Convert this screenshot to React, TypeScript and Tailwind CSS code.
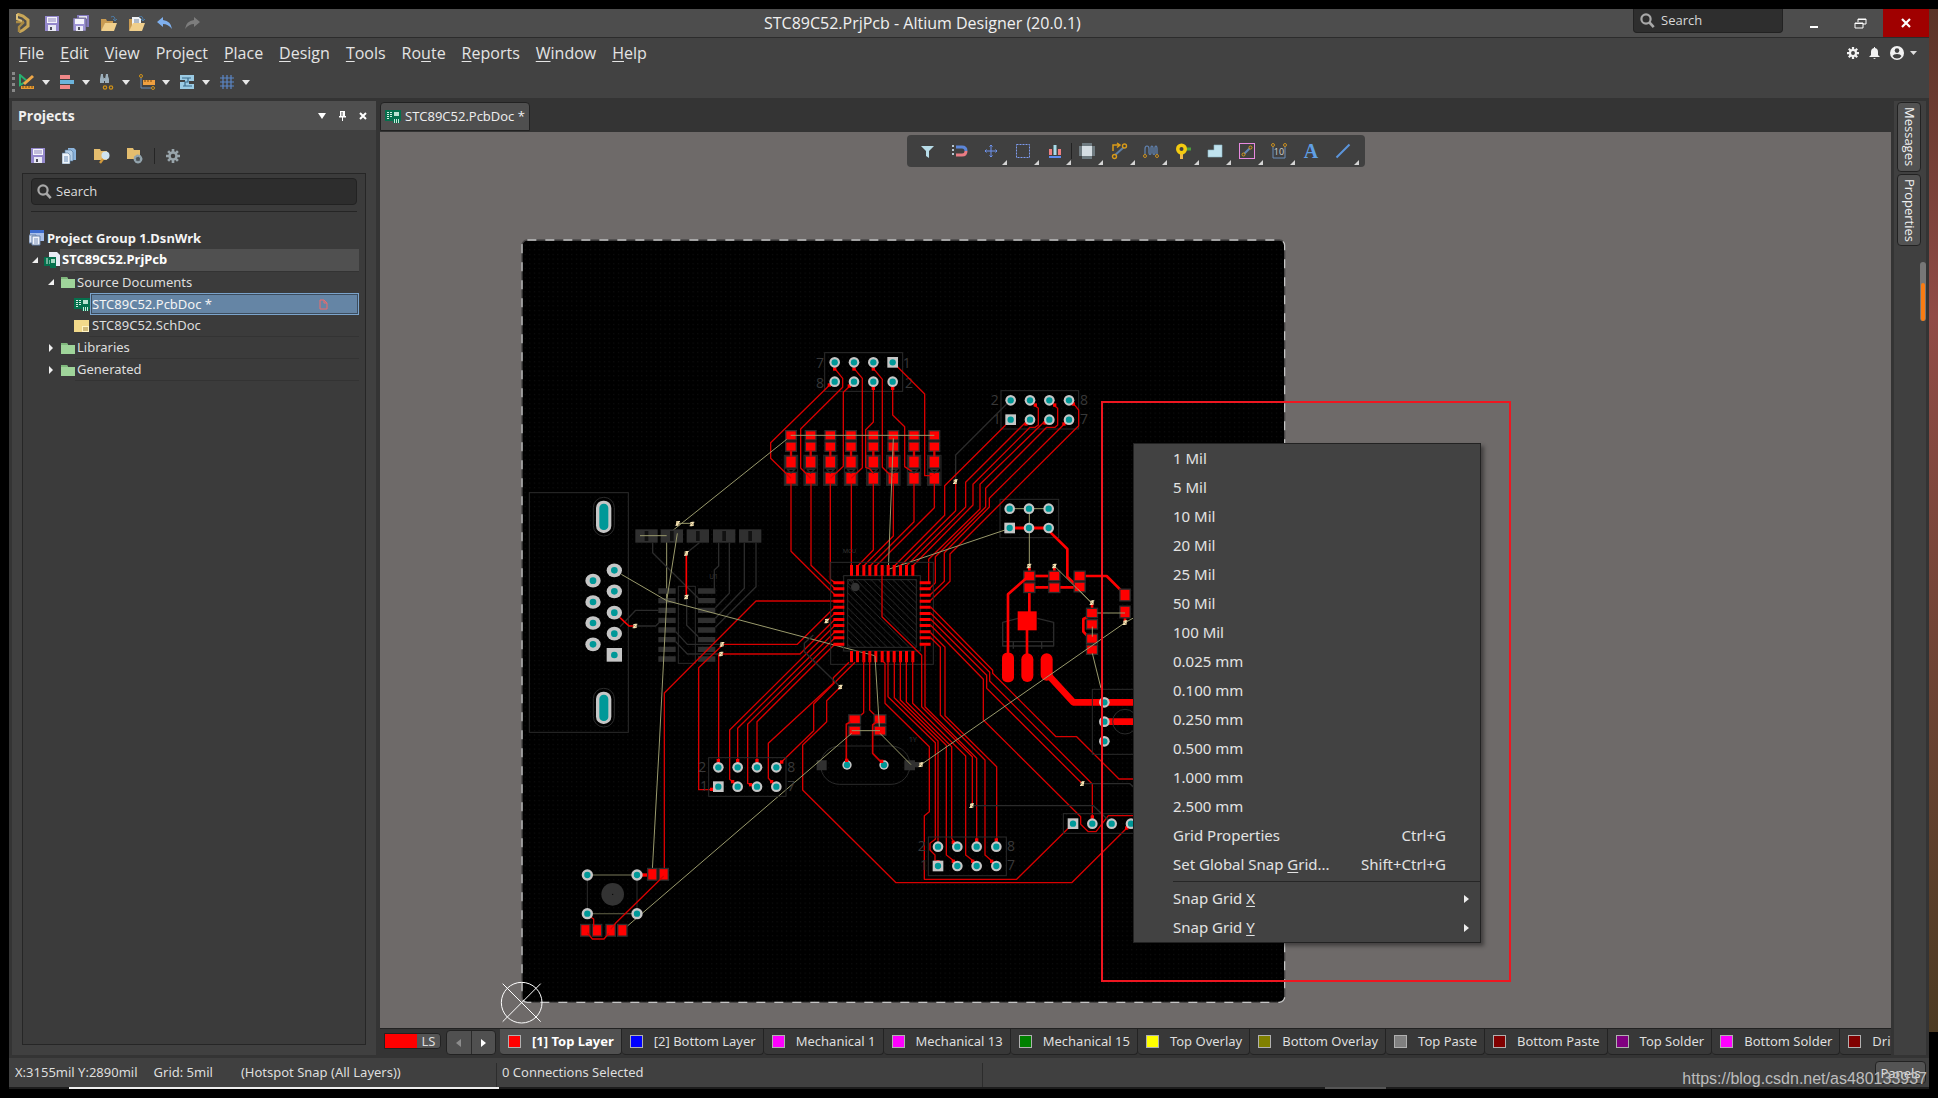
import React from "react";

type Pt = [number, number];

/* ---------- small icons ---------- */

const Caret = () => (
  <svg width="8" height="5" viewBox="0 0 8 5" aria-hidden="true"><path d="M0 0h8L4 5z" fill="#e8e8e8" /></svg>
);

const Floppy = () => (
  <svg width="14" height="15" viewBox="0 0 14 15" aria-hidden="true">
    <path d="M0 0h14v15H0z" fill="#9488cc" />
    <path d="M2 1h10v6H2z" fill="#f4f4fb" />
    <path d="M3 3h8M3 5h8" stroke="#8f86bd" />
    <path d="M3 9h8v6H3z" fill="#e9e9f6" />
    <path d="M5 11h2v3H5z" fill="#4d4d5c" />
  </svg>
);

const FloppyAll = () => (
  <svg width="16" height="16" viewBox="0 0 16 16" aria-hidden="true">
    <path d="M4 0h12v12H4z" fill="#8278bb" />
    <path d="M6 1h8v3H6z" fill="#e3e2f4" />
    <path d="M0 3h13v13H0z" fill="#9c92d4" stroke="#4d4d4d" strokeWidth=".6" />
    <path d="M2 4h9v5H2z" fill="#f4f4fb" />
    <path d="M3 11h7v5H3z" fill="#e9e9f6" />
    <path d="M5 12h2v3H5z" fill="#4d4d5c" />
  </svg>
);

const FolderOpen = ({ doc = false }: { doc?: boolean }) => (
  <svg width="17" height="17" viewBox="0 0 17 17" aria-hidden="true">
    <path d="M0 4h5l1 2h6v3H4L1 15H0z" fill="#c99b52" />
    {doc && <path d="M3 2h7l2 2v7H3z" fill="#f1f3f6" />}
    {doc && <path d="M5 5h5M5 7h5" stroke="#6d7f99" />}
    <path d="M4 8h12l-3 8H0z" fill="#f0cf8c" />
    <path d="M10 2q4-2 4 3M12 4l2 2 2-2" fill="none" stroke="#4d7da8" />
  </svg>
);

const Undo = ({ color, flip = false }: { color: string; flip?: boolean }) => (
  <svg width="15" height="13" viewBox="0 0 15 13" aria-hidden="true">
    <path
      d={flip ? "M15 5 9 0v3Q1 4 0 12q4-5 9-5v3z" : "M0 5l6-5v3q8 1 9 9-4-5-9-5v3z"}
      fill={color}
    />
  </svg>
);

const Logo = () => (
  <svg width="14" height="20" viewBox="0 0 14 20" aria-hidden="true">
    <path d="M1 1l6 2 5 4v6l-5 4-4 2" fill="none" stroke="#c9a758" strokeWidth="3" />
    <path d="M0 9h8M8 9l-5 5v5" fill="none" stroke="#a88943" strokeWidth="2.4" />
    <path d="M1 1v5l5 2" fill="none" stroke="#dcc07a" strokeWidth="2" />
  </svg>
);

const Lens = () => (
  <svg width="15" height="15" viewBox="0 0 15 15" aria-hidden="true">
    <circle cx="6" cy="6" r="4.6" fill="none" stroke="#a8a8a8" strokeWidth="2.2" />
    <path d="M9.5 9.5l4.2 4.6" stroke="#a8a8a8" strokeWidth="2.6" />
  </svg>
);

const Pcb = () => (
  <svg width="16" height="13" viewBox="0 0 16 13" aria-hidden="true">
    <path d="M0 0h16v11h-1v2H8v-2H0z" fill="#05704d" />
    <path d="M2 2.5h2M2 4.500h2M2 6.500h2M2 8.500h2M5 2.500h2M5 4.500h2M5 6.500h2" stroke="#d5efe4" />
    <path d="M9 2h5v4H9z" fill="#b9e2d1" />
    <path d="M9.500 9v4M11.500 9v4M13.500 9v4" stroke="#c8e8da" />
  </svg>
);

const ProjectPcb = () => (
  <svg width="16" height="16" viewBox="0 0 16 16" aria-hidden="true">
    <path d="M5 0h8l3 3v11H5z" fill="#e8ebf5" />
    <path d="M0 5h12v9H0z" fill="#05704d" />
    <path d="M2 7h2M2 9h2M2 11h2M5 9h1M5 11h1" stroke="#d5efe4" />
    <path d="M7 7h4v4H7z" fill="#a8d8c4" />
    <path d="M6 15h6" stroke="#05704d" strokeWidth="2" />
  </svg>
);

const Group = () => (
  <svg width="16" height="16" viewBox="0 0 16 16" aria-hidden="true">
    <path d="M1 0h14v11H1z" fill="#a9c0ea" />
    <path d="M1 0h14v3H1z" fill="#3f6ed0" />
    <path d="M0 5h7v8H0z" fill="#dfe6f3" stroke="#6780a8" />
    <path d="M3 6h8v9H3z" fill="#f1f4fa" stroke="#6780a8" />
    <path d="M5 9h4M5 11h4M5 13h4" stroke="#7a90b8" />
  </svg>
);

const Folder = () => (
  <svg width="14" height="12" viewBox="0 0 14 12" aria-hidden="true">
    <path d="M0 1h6l1 2h7v9H0z" fill="#9fd49a" />
    <path d="M0 1h6l1 2H0z" fill="#7fb87c" />
  </svg>
);

const Sch = () => (
  <svg width="15" height="12" viewBox="0 0 15 12" aria-hidden="true">
    <path d="M0 0h15v12H0z" fill="#f2d98a" />
    <path d="M8 6h7v6H8z" fill="#fff3c4" />
    <path d="M9 8h5M9 10h5" stroke="#a0802c" />
  </svg>
);

const Gear = ({ color, size = 14, hole = "#404040" }: { color: string; size?: number; hole?: string }) => (
  <svg width={size} height={size} viewBox="0 0 16 16" aria-hidden="true">
    <circle cx="8" cy="8" r="5.4" fill={color} />
    <path d="M8 0v16M0 8h16M2.4 2.4l11.2 11.2M13.6 2.4 2.4 13.6" stroke={color} strokeWidth="3" />
    <circle cx="8" cy="8" r="2.6" fill={hole} />
  </svg>
);

/* ---------- top area ---------- */

const menus: [string, string, string][] = [
  ["", "F", "ile"], ["", "E", "dit"], ["", "V", "iew"], ["Proje", "c", "t"], ["", "P", "lace"], ["", "D", "esign"],
  ["", "T", "ools"], ["Ro", "u", "te"], ["", "R", "eports"], ["", "W", "indow"], ["", "H", "elp"],
];

const Key = ({ parts }: { parts: [string, string, string] }) => (
  <>{parts[0]}<span className="underline underline-offset-2">{parts[1]}</span>{parts[2]}</>
);

function TitleBar() {
  return (
    <header className="flex h-[29px] shrink-0 items-start border-b border-[#2c2c2c] bg-[#4d4d4d]">
      <div className="flex h-7 w-[755px] shrink-0 items-center gap-3 pl-[7px]">
        <span className="w-[17px]"><Logo /></span>
        <button aria-label="Save" className="w-4"><Floppy /></button>
        <button aria-label="Save all" className="w-4"><FloppyAll /></button>
        <button aria-label="Open" className="w-4"><FolderOpen /></button>
        <button aria-label="Open project" className="w-4"><FolderOpen doc /></button>
        <button aria-label="Undo" className="w-4"><Undo color="#7fb0ee" /></button>
        <button aria-label="Redo" className="w-4"><Undo color="#7d7d7d" flip /></button>
      </div>
      <h1 className="h-7 text-base leading-[29px] whitespace-nowrap text-[#f0f0f0]">STC89C52.PrjPcb - Altium Designer (20.0.1)</h1>
      <div className="flex h-7 flex-1 justify-end">
        <label className="mr-2 flex h-6 w-[150px] items-center gap-1.5 rounded-b border border-t-0 border-[#222] bg-[#2e2e2e] pl-1.5">
          <Lens />
          <input aria-label="Search commands" placeholder="Search" className="w-24 bg-transparent text-[13px] outline-none placeholder:text-[#d8d8d8]" />
        </label>
        <button aria-label="Minimize" className="flex w-[46px] items-center justify-center pt-2">
          <span className="h-0.5 w-2 bg-white" />
        </button>
        <button aria-label="Restore" className="flex w-[46px] items-center justify-center">
          <svg width="13" height="11" viewBox="0 0 13 11" aria-hidden="true">
            <path d="M4 4V1h8v5H9M4 1.5h8M1 5h8v5H1zM1 5.5h8" fill="none" stroke="#fff" />
          </svg>
        </button>
        <button aria-label="Close" className="flex w-[46px] items-center justify-center bg-[#a00000]">
          <svg width="10" height="10" viewBox="0 0 10 10" aria-hidden="true">
            <path d="M1 1l8 8M9 1 1 9" stroke="#fff" strokeWidth="2.2" />
          </svg>
        </button>
      </div>
    </header>
  );
}

function MenuBar() {
  return (
    <nav className="flex h-[30px] shrink-0 items-center justify-between bg-[#424242] pr-3 pl-0.5">
      <div className="flex">
        {menus.map((m) => (
          <button key={m.join("")} className="px-2 text-base leading-6 text-[#e4e4e4]"><Key parts={m} /></button>
        ))}
      </div>
      <div className="flex items-center gap-2.5">
        <button aria-label="Preferences"><Gear color="#f2f2f2" size={12} hole="#424242" /></button>
        <button aria-label="Notifications">
          <svg width="11" height="12" viewBox="0 0 11 12" aria-hidden="true">
            <path d="M5 0h1v1q3 .6 3 4v3l2 2H0l2-2V5q0-3.400 3-4zM4 11h3l-1.500 1z" fill="#f2f2f2" />
          </svg>
        </button>
        <button aria-label="Account" className="flex items-center gap-1.5">
          <svg width="14" height="14" viewBox="0 0 14 14" aria-hidden="true">
            <circle cx="7" cy="7" r="7" fill="#f2f2f2" />
            <circle cx="7" cy="4.600" r="2.300" fill="#424242" />
            <path d="M2.500 10q1-2 4.500-2t4.500 2Q10 12.500 7 12.500T2.500 10z" fill="#424242" />
          </svg>
          <svg width="7" height="4" viewBox="0 0 7 4" aria-hidden="true"><path d="M0 0h7L3.500 4z" fill="#ddd" /></svg>
        </button>
      </div>
    </nav>
  );
}

const utilities: { name: string; art: React.ReactNode }[] = [
  { name: "Drawing tools", art: <><path d="M1 1v10l7-4z" fill="none" stroke="#28b070" strokeWidth="2" /><path d="M4 9l9-8 2 2-9 8z" fill="#f0a848" /><path d="M2 12h13v3H2z" fill="#e89a30" /><path d="M4 12v2M7 12v2M10 12v2M13 12v2" stroke="#6a4a1a" /></> },
  { name: "Align", art: <><path d="M1 1h10v4H1zM1 11h10v4H1z" fill="#f08888" /><path d="M1 6h14v4H1z" fill="#6cb4dc" /></> },
  { name: "Find", art: <><path d="M2 0h2v2l1 3v4H1V5zM7 0h2v2l1 3v4H6V5zM5 4h1v3H5z" fill="#9db0bd" /><circle cx="6" cy="13.500" r="1.700" fill="none" stroke="#cf9118" strokeWidth="1.200" /><circle cx="12" cy="13.500" r="1.700" fill="none" stroke="#cf9118" strokeWidth="1.200" /></> },
  { name: "Dimensions", art: <><path d="M2 2v12h12" fill="none" stroke="#6a8db8" /><circle cx="2" cy="2" r="1.500" fill="#424242" stroke="#cf9118" /><circle cx="14" cy="14" r="1.500" fill="#424242" stroke="#cf9118" /><path d="M4 6h12v5H4z" fill="#f0a040" /><path d="M6 6v2M9 6v2M12 6v2" stroke="#7a4a10" /></> },
  { name: "Rooms", art: <><path d="M1 1h14v6h-5v3h5v5H1V8h5V6H1z" fill="#9bcbe4" /><path d="M3 4h9M4 12h9M9 4v4H6v4" stroke="#3d6d8c" strokeWidth="1.200" fill="none" /></> },
  { name: "Grids", art: <path d="M4 1v14M8 1v14M12 1v14M1 4h14M1 8h14M1 12h14" stroke="#5b87c8" strokeWidth="1.200" /> },
];

function UtilityBar() {
  return (
    <div className="flex h-[30px] shrink-0 items-center bg-[#424242] pb-0.5 pl-[3px]">
      <span className="h-5 w-[3px] border-l-[3px] border-dotted border-[#888]" />
      <div className="ml-1 flex">
        {utilities.map((u) => (
          <button key={u.name} aria-label={u.name} className="flex w-10 items-center gap-[7px]">
            <svg width="16" height="16" viewBox="0 0 16 16" aria-hidden="true">{u.art}</svg>
            <Caret />
          </button>
        ))}
      </div>
    </div>
  );
}

/* ---------- projects panel ---------- */

const Twist = ({ open }: { open: boolean }) => (
  <svg width="6" height="8" viewBox="0 0 6 8" aria-hidden="true">
    <path d={open ? "M6 1v6H0z" : "M1 0l4 4-4 4z"} fill="#f0f0f0" />
  </svg>
);

function ProjectsPanel() {
  return (
    <aside className="flex w-[364px] shrink-0 flex-col bg-[#404040]">
      <div className="flex h-[29px] items-center bg-[#4f4f4f] pr-[9px] pl-1.5">
        <h2 className="flex-1 text-sm font-bold text-[#f0f0f0]">Projects</h2>
        <div className="flex items-center gap-3">
          <button aria-label="Panel menu"><svg width="8" height="6" viewBox="0 0 8 6" aria-hidden="true"><path d="M0 0h8L4 6z" fill="#fff" /></svg></button>
          <button aria-label="Pin"><svg width="9" height="10" viewBox="0 0 9 10" aria-hidden="true"><path d="M2 0h5v5h1v1.500H5V10H4V6.500H1V5h1z" fill="#fff" /><path d="M4 1v4" stroke="#4f4f4f" /></svg></button>
          <button aria-label="Close panel"><svg width="8" height="8" viewBox="0 0 8 8" aria-hidden="true"><path d="M1 1l6 6M7 1 1 7" stroke="#fff" strokeWidth="2" /></svg></button>
        </div>
      </div>
      <div className="flex h-[43px] items-center gap-[17px] pt-2 pl-[19px]">
        <button aria-label="Save document"><Floppy /></button>
        <button aria-label="Copy">
          <svg width="15" height="16" viewBox="0 0 15 16" aria-hidden="true">
            <path d="M6 0h6l2 2v10H6z" fill="#8cb4dc" /><path d="M3 2h6l2 2v9H3z" fill="#b4cfe8" stroke="#4c6f94" strokeWidth=".6" /><path d="M0 5h6l2 2v9H0z" fill="#eef4fa" stroke="#4c6f94" strokeWidth=".6" /><path d="M2 9h4M2 11h4M2 13h4" stroke="#6a8db8" />
          </svg>
        </button>
        <button aria-label="Explore folder">
          <svg width="16" height="16" viewBox="0 0 16 16" aria-hidden="true"><path d="M0 1h6l1 2h6v9H0z" fill="#e4bd6e" /><circle cx="11.500" cy="7.500" r="4" fill="#cfe4f0" /><path d="M9 11l-3 4" stroke="#d39a3a" strokeWidth="2.400" /></svg>
        </button>
        <button aria-label="Folder options">
          <svg width="16" height="16" viewBox="0 0 16 16" aria-hidden="true"><path d="M0 0h6l1 2h6v9H0z" fill="#e4bd6e" /><circle cx="11" cy="11" r="3.200" fill="#4b5459" stroke="#93a4ad" strokeWidth="2.400" strokeDasharray="2 .6" /><circle cx="11" cy="11" r="3.400" fill="none" stroke="#93a4ad" strokeWidth="1.600" /></svg>
        </button>
        <span className="-ml-1.5 h-4 w-px bg-[#252525]" />
        <button aria-label="Panel settings" className="-ml-1.5"><Gear color="#98a4aa" size={14} hole="#3c3c3c" /></button>
      </div>
      <div className="mx-2.5 mb-2.5 flex-1 border border-[#262626] bg-[#3b3b3b] pt-1">
        <label className="mx-2 flex h-[27px] items-center gap-1 rounded border border-[#222] bg-[#2d2d2d] pl-[5px]">
          <Lens />
          <input aria-label="Search projects" placeholder="Search" className="flex-1 bg-transparent text-[13px] outline-none placeholder:text-[#dcdcdc]" />
        </label>
        <div className="mx-2 mt-1.5 border-t border-[#252525]" />
        <ul role="tree" aria-label="Projects" className="mt-[15px] pr-1.5 font-['Noto_Sans',sans-serif] text-[13px] leading-[21px] text-[#dedede]">
          <li className="flex h-[22px] items-center gap-0.5 pl-1.5 font-bold text-[#f4f4f4]"><Group />Project Group 1.DsnWrk</li>
          <li className="flex h-[22px] items-center pl-[9px] font-bold text-white">
            <Twist open /><span className="ml-1.5"><ProjectPcb /></span>
            <span className="h-[22px] flex-1 bg-[#505050] pl-0.5">STC89C52.PrjPcb</span>
          </li>
          <li className="flex h-[22px] items-center pl-[25px]">
            <Twist open /><span className="ml-[7px]"><Folder /></span>
            <span className="h-[22px] flex-1 border-t border-[#333] pl-0.5">Source Documents</span>
          </li>
          <li className="flex h-[22px] items-center pl-[51px]">
            <Pcb />
            <span aria-selected="true" role="treeitem" className="flex h-[22px] flex-1 items-center justify-between border border-[#7ba4cc] bg-[#6585a5] pr-[30px] pl-px text-[#f4f4f4] outline -outline-offset-2 outline-[#3d4d5e]">
              STC89C52.PcbDoc *
              <svg width="9" height="11" viewBox="0 0 9 11" aria-hidden="true"><path d="M1 1h4l3 3v6H1zM5 1v3h3" fill="none" stroke="#ef6a6a" /></svg>
            </span>
          </li>
          <li className="flex h-[22px] items-center pl-[51px]"><Sch /><span className="h-[22px] flex-1 border-b border-[#333] pl-[3px]">STC89C52.SchDoc</span></li>
          {["Libraries", "Generated"].map((t) => (
            <li key={t} className="flex h-[22px] items-center pl-[25px]">
              <Twist open={false} /><span className="ml-[7px]"><Folder /></span>
              <span className="h-[22px] flex-1 border-b border-[#333] pl-0.5">{t}</span>
            </li>
          ))}
        </ul>
      </div>
    </aside>
  );
}

/* ---------- board drawing ---------- */

const RED = "#d80000";
const HOT = "#ff0000";
const SILK = "#2b2b2b";
const RAT = "#9a9a6c";

const Lines = ({ d, c = RED, w = 4 }: { d: string[]; c?: string; w?: number }) => (
  <g fill="none" stroke={c} strokeWidth={w} strokeLinejoin="round">{d.map((p) => <polyline key={p} points={p} />)}</g>
);

const Via = ({ at }: { at: Pt[] }) => (
  <g fill="#f4e2b4">
    {at.map(([x, y]) => (
      <g key={`${x},${y}`}>
        <path d={`M${x - 5} ${y - 6}h10v12h-10z`} />
        <path d={`M${x - 1} ${y - 7}h8v3h-8zM${x - 7} ${y + 4}h8v3h-8z`} />
        <path d={`M${x - 4} ${y - 3}h3v3h-3zM${x + 1} ${y + 1}h3v3h-3z`} fill="#8d7a50" />
      </g>
    ))}
  </g>
);

const Holes = ({ at, sq = [], r = 16 }: { at: Pt[]; sq?: Pt[]; r?: number }) => (
  <g>
    {at.map(([x, y]) => <circle key={`${x},${y}`} cx={x} cy={y} r={r} fill="#c6c6c6" />)}
    {sq.map(([x, y]) => <rect key={`${x},${y}`} x={x - 16} y={y - 16} width="32" height="32" fill="#c6c6c6" />)}
    {[...at, ...sq].map(([x, y]) => <circle key={`${x}.${y}`} cx={x} cy={y} r="9.500" fill="#009898" />)}
  </g>
);

const Pads = ({ at, w = 29, h = 25 }: { at: Pt[]; w?: number; h?: number }) => (
  <g>
    {at.map(([x, y]) => <rect key={`${x},${y}`} x={x - w / 2 - 4} y={y - h / 2 - 4} width={w + 8} height={h + 8} fill="#2d2d2d" />)}
    {at.map(([x, y]) => <rect key={`${x}.${y}`} x={x - w / 2} y={y - h / 2} width={w} height={h} fill={HOT} />)}
  </g>
);

const Boxes = ({ of }: { of: [number, number, number, number][] }) => (
  <g fill="none" stroke={SILK} strokeWidth="3">
    {of.map(([x1, y1, x2, y2]) => <rect key={`${x1},${y1}`} x={x1} y={y1} width={x2 - x1} height={y2 - y1} />)}
  </g>
);

const Marks = ({ of }: { of: [string, number, number][] }) => (
  <g fill="#383838" fontSize="42" textAnchor="middle">
    {of.map(([t, x, y]) => <text key={`${x},${y}`} x={x} y={y + 15}>{t}</text>)}
  </g>
);

const cols = [153, 212, 271, 333, 400, 460, 522, 583];
const pins = Array.from({ length: 11 }, (_, i) => Math.round(i * 18.35));
const row = (xs: number[], y: number): Pt[] => xs.map((x) => [x, y]);

function Leds() {
  return (
    <g transform="translate(2220 990)">
      <Boxes of={[[254, 68, 488, 184], [783, 182, 1016, 297], [780, 508, 956, 623]]} />
      <Marks of={[["7", 240, 100], ["8", 240, 158], ["1", 500, 100], ["2", 507, 158], ["2", 764, 209], ["1", 770, 268], ["8", 1032, 209], ["7", 1032, 268]]} />
      <Boxes of={cols.map((x): [number, number, number, number] => [x - 20, 376, x + 20, 466])} />
      <Pads at={[...row(cols, 316), ...row(cols, 350)]} w={28} h={24} />
      <Pads at={[...row(cols, 396), ...row(cols, 445)]} w={28} h={32} />
      <Lines c={SILK} d={["800,222 647,375 647,455", ...cols.map((x) => `${x - 12},418 ${x + 12},418 ${x},429 ${x - 12},418`)]} />
      <Lines
        d={[
          "266,168 92,338 92,385 153,445", "284,115 308,145 308,172 182,297 182,414 212,445", "330,168 310,187 310,409 272,445",
          "342,115 367,145 367,413 334,445", "400,170 400,276 377,299 377,412 390,417 400,430", "400,115 427,148 427,412 460,445",
          "458,170 458,255 494,290 494,410 515,424", "470,108 554,192 554,437 575,437",
          "153,460 153,664 285,795", "213,460 213,706 285,776", "271,460 271,748 285,758", "334,460 334,710",
          "400,460 400,660 353,708", "460,460 460,618 371,708", "522,460 522,575 390,708", "583,460 583,533 408,708",
          "797,285 614,467 614,556 463,708", "647,460 647,542 481,708", "855,279 677,457 677,531 499,708",
          "882,225 895,235 895,285 885,292 870,292 699,463 699,525 518,708", "913,275 720,463 720,537 566,688 566,758",
          "940,225 953,235 953,285 945,292 920,292 737,475 737,531 586,680 586,758 568,776", "970,285 748,505 748,531 613,668 613,754 570,795",
          "1000,220 1016,240 1016,287 630,672 630,754 570,813",
        ]}
      />
      <Lines w={7} d={cols.map((x) => `${x},362 ${x},380`)} c={RED} />
      <Lines w={9} c={HOT} d={["825,594 926,594"]} />
      <Lines w={8} c={HOT} d={["926,602 982,657 982,740 1015,772", "868,738 943,738", "868,772 1019,772", "1019,738 1100,738 1155,793", "868,773 868,850", "868,712 868,738", "943,712 943,738"]} />
      <g fill={HOT}>
        {[[284, 117], [342, 117], [400, 117], [400, 175], [458, 175], [268, 165], [328, 168], [858, 282], [886, 225], [944, 225], [1000, 222], [915, 279], [972, 282]].map(([x, y]) => (
          <rect key={`${x},${y}`} x={x - 5} y={y - 5} width="10" height="10" />
        ))}
      </g>
      <Pads at={[[868, 738], [868, 773], [943, 738], [943, 773], [1019, 738], [1019, 771]]} />
      <Lines c={RAT} w={3} d={["152,316 583,316", "140,328 -220,616 -220,812", "460,325 445,718 795,600", "810,536 926,536", "868,536 868,705", "943,708 1056,820"]} />
      <Holes
        at={[...row([284, 342, 400], 97), ...row([284, 342, 400, 458], 155), ...row([812, 870, 928, 987], 211), ...row([870, 928, 987], 269), ...row([809, 867, 926], 536), ...row([867, 926], 594)]}
        sq={[[458, 97], [812, 269], [809, 594]]}
      />
      <Via at={[[646, 455], [867, 708], [943, 708]]} />
    </g>
  );
}

function Serial() {
  const y8 = [363, 392, 421, 451, 480, 509, 538, 567];
  return (
    <g transform="translate(1530 1410)">
      <Boxes of={[[58, 68, 355, 787], [505, 349, 556, 580]]} />
      {[141, 714].map((y) => (
        <g key={y}>
          <rect x="250" y={y - 59} width="63" height="116" rx="31" fill="none" stroke={SILK} strokeWidth="3" />
          <rect x="258" y={y - 49} width="46" height="97" rx="22" fill="#c6c6c6" />
          <rect x="268" y={y - 40} width="27" height="79" rx="13" fill="#009898" />
        </g>
      ))}
      <g fill="#c6c6c6">
        {[[313, 301], [249, 332], [313, 364], [249, 396], [313, 428], [249, 459], [313, 491], [249, 523]].map(([x, y]) => <ellipse key={y} cx={x} cy={y} rx="23" ry="20.500" />)}
        <rect x="290" y="534" width="46" height="41" />
      </g>
      <g fill="#009898">
        {[[313, 301], [249, 332], [313, 364], [249, 396], [313, 428], [249, 459], [313, 491], [249, 523], [313, 555]].map(([x, y]) => <circle key={y} cx={x} cy={y} r="10" />)}
      </g>
      <g fill="#303030">
        {[376, 452, 530, 609, 687].map((x) => <rect key={x} x={x} y="178" width="67" height="40" />)}
        {y8.map((y) => <path key={y} d={`M445 ${y - 8}h52v16h-52zM564 ${y - 8}h52v16h-52z`} />)}
      </g>
      <g fill="#111">{[404, 480, 558, 637, 715].map((x) => <rect key={x} x={x} y="183" width="11" height="30" />)}</g>
      <Lines c={SILK} d={["428,218 428,248 565,385", "568,218 530,248", "626,218 626,288 613,300 613,360", "658,218 658,370 616,413", "703,218 703,355 616,445", "738,218 738,350 616,472", "445,421 377,421 330,470", "375,468 437,468 447,458", "530,385 530,466 565,500", "497,485 532,523 636,523", "497,515 532,552 633,552"]} />
      <text x="598" y="327" fontSize="20" fill="#3a3a3a">U1</text>
      <Lines
        d={[
          "975,393 738,393 463,669 463,1200", "975,411 862,523 640,523 566,593 566,959 605,959", "975,448 870,552 626,552 626,875",
          "975,430 950,453", "975,466 659,780 659,928 680,945", "975,485 683,775 683,880", "975,503 713,763 713,940 735,948", "975,522 741,755 741,880",
        ]}
      />
      <Lines w={5} c={HOT} d={["529,250 529,381", "330,443 357,468 375,468"]} />
      <Lines c={RAT} w={3} d={["390,197 470,197", "503,160 546,160", "502,190 470,392 447,840 427,1200", "334,313 470,392 900,506 1098,558"]} />
      <Via at={[[503, 160], [546, 162], [529, 250], [529, 381], [375, 468], [636, 523], [633, 552]]} />
    </g>
  );
}

function Mcu() {
  return (
    <g transform="translate(2340 1620)">
      <Boxes of={[[152, 67, 460, 373], [191, 107, 421, 333], [203, 119, 409, 322]]} />
      <rect x="203" y="119" width="206" height="203" fill="url(#hatch)" />
      <circle cx="226" cy="141" r="13" fill="#333" />
      <circle cx="213" cy="128" r="8" fill="none" stroke={SILK} strokeWidth="3" />
      <text x="188" y="38" fontSize="18" fill="#3a3a3a">MCU</text>
      <g fill={HOT}>
        {pins.map((p) => <path key={p} d={`M${210 + p} 75h9v32h-9zM${210 + p} 333h9v34h-9zM160 ${124 + p}h33v9h-33zM419 ${124 + p}h33v9h-33z`} />)}
      </g>
      <Lines
        d={[
          "306,107 306,230 425,346 425,500 577,650 577,792", "207,367 160,413 160,430 -35,610 -35,715 -11,740", "225,367 180,412 101,492 101,572 -10,680",
          "181,441 140,482 140,545 68,615 68,750 348,1028 875,1028 1040,865",
          "251,360 251,518 237,530", "269,360 269,510 290,530", "306,360 315,370 315,490 448,620 448,815 433,827 433,1018 710,1018 865,865",
          "324,360 324,470 466,608 466,898 450,910 450,930 465,945 465,965", "343,360 343,473 474,603 474,905", "361,360 361,480 499,616 499,945 525,965",
          "379,360 379,486 515,620 515,895 525,910", "398,360 398,490 557,648 557,945 585,967", "435,318 435,500 590,655 590,905",
          "452,293 481,322 481,525 615,660 615,945 640,967", "452,278 495,322 495,527 650,680 650,905",
          "452,201 638,391 638,400 828,590 890,590 1017,717 1100,717", "452,220 629,397 629,423 937,732 937,830",
          "452,238 620,406 620,445 907,731", "452,256 610,418 610,540 902,830 902,853 925,875 948,875 985,827 1100,827",
        ]}
      />
      <Lines c={SILK} d={["181,441 73,335 73,310 100,285", "575,797 940,797 990,845", "907,731 1050,731 1070,750"]} />
      <Pads at={[[224, 538], [224, 572], [300, 538], [300, 572]]} w={31} h={23} />
      <rect x="122" y="618" width="268" height="115" rx="57" fill="none" stroke={SILK} strokeWidth="3" />
      <path d="M110 661h30v30h-30zM373 661h32v30h-32zM405 666h14v16h-14z" fill="#303030" />
      <text x="386" y="605" fontSize="22" fill="#3a3a3a">1Y</text>
      <Lines c={RED} w={5} d={["212,545 199,553 199,665", "290,545 278,555 278,640 305,668"]} />
      <Lines c={SILK} d={["715,235 668,247 668,318 821,318 821,247 772,235", "668,305 821,305", "700,305 700,326", "785,305 785,326"]} />
      <Lines w={8} c={HOT} d={["684,350 684,163 747,107", "741,265 741,345", "936,190 936,219", "1035,216 1035,248", "930,228 910,237 910,275 930,296"]} />
      <rect x="713" y="214" width="57" height="57" fill={HOT} />
      <rect x="666" y="338" width="36" height="89" rx="15" fill={HOT} />
      <rect x="724" y="340" width="36" height="86" rx="18" fill={HOT} />
      <rect x="782" y="340" width="36" height="82" rx="18" fill={HOT} />
      <Lines w={20} c={HOT} d={["800,400 880,487 1100,487", "973,545 1100,545"]} />
      <Boxes of={[[937, 448, 1120, 643]]} />
      <circle cx="1035" cy="545" r="37" fill="none" stroke={SILK} strokeWidth="3" />
      <Pads at={[[936, 219], [936, 253], [936, 296], [936, 329]]} w={29} h={24} />
      <Pads at={[[1035, 165], [1035, 216]]} w={27} h={31} />
      <Lines c={RAT} w={3} d={["285,348 298,560", "215,572 300,572", "215,580 -460,1160", "300,580 393,674", "423,674 1035,248 1100,212", "937,260 937,290", "937,340 963,445", "952,219 1035,219", "895,148 936,190"]} />
      <Holes at={[[973, 487], [973, 545], [973, 604]]} />
      <Holes at={[[201, 675], [312, 675]]} r={14} />
      <Via at={[[140, 243], [181, 441], [423, 674], [936, 188], [1035, 248], [907, 731], [575, 797]]} />
    </g>
  );
}

function Headers() {
  return (
    <g transform="translate(2040 2100)">
      <Boxes of={[[86, 173, 318, 289], [745, 411, 979, 527], [1150, 341, 1400, 400]]} />
      <Marks of={[["2", 67, 200], ["1", 72, 258], ["8", 334, 200], ["7", 334, 258], ["2", 725, 438], ["1", 732, 496], ["8", 993, 438], ["7", 993, 496]]} />
      <g fill={HOT}>
        {[[115, 182], [173, 182], [231, 182], [305, 186], [158, 245], [212, 254], [275, 245], [95, 268], [774, 485], [820, 427], [890, 420], [949, 420], [820, 484], [878, 484], [935, 484], [1237, 351], [1340, 384], [605, 184], [500, 181]].map(([x, y]) => (
          <rect key={`${x},${y}`} x={x - 5} y={y - 5} width="10" height="10" />
        ))}
      </g>
      <Holes
        at={[...row([115, 173, 231, 289], 202), ...row([173, 231, 289], 260), ...row([774, 832, 890, 949], 440), ...row([832, 890, 949], 498), ...row([1237, 1295, 1353], 371)]}
        sq={[[115, 260], [774, 498], [1179, 371]]}
      />
    </g>
  );
}

function ResetButton() {
  return (
    <g transform="translate(1530 2220)">
      <Boxes of={[[232, 405, 381, 521]]} />
      <circle cx="308" cy="463" r="34" fill="#333" />
      <circle cx="308" cy="463" r="2" fill="#000" />
      <Lines c="#4b4b36" d={["232,405 381,405", "232,521 381,521"]} />
      <Lines w={10} c={HOT} d={["381,405 427,405"]} />
      <Pads at={[[427, 403], [461, 403], [226, 571], [261, 571], [302, 571], [337, 571]]} w={24} h={31} />
      <Lines d={["461,408 318,548 302,568", "251,560 251,537 240,530", "232,578 247,597 282,597 296,580"]} />
      <Holes at={[[232, 405], [381, 405], [232, 521], [381, 521]]} r={17} />
    </g>
  );
}

function Board() {
  return (
    <svg viewBox="1140 396 4536 2688" className="h-[896px] w-[1512px] shrink-0 font-['Open_Sans',sans-serif]" role="img" aria-label="STC89C52 board layout">
      <defs>
        <pattern id="dots" width="14" height="14" patternUnits="userSpaceOnUse"><rect x="6" y="6" width="3" height="3" fill="#141414" /></pattern>
        <pattern id="hatch" width="22" height="22" patternUnits="userSpaceOnUse"><path d="M-2-2l26 26M-2 20l4 4M20-2l4 4" stroke="#343434" strokeWidth="2.500" /></pattern>
      </defs>
      <rect x="1566" y="720" width="2288" height="2287" rx="16" fill="#000" />
      <rect x="1566" y="720" width="2288" height="2287" rx="16" fill="url(#dots)" />
      <rect x="1566" y="720" width="2288" height="2287" rx="16" fill="none" stroke="#4a4848" strokeWidth="4" />
      <rect x="1566" y="720" width="2288" height="2287" rx="16" fill="none" stroke="#c4c4c4" strokeWidth="4" strokeDasharray="27 27" />
      <Leds />
      <Serial />
      <Mcu />
      <Headers />
      <ResetButton />
      <g fill="none" stroke="#fff" strokeWidth="3">
        <circle cx="1565" cy="3008" r="61" />
        <path d="M1508 2951l114 114M1622 2951l-114 114" />
      </g>
      <rect x="3306" y="1206" width="1224" height="1737" fill="none" stroke="#ee1620" strokeWidth="6" />
    </svg>
  );
}

/* ---------- active bar ---------- */

const tools: { name: string; more: boolean; art: React.ReactNode }[] = [
  { name: "Filter", more: false, art: <path d="M2 3h13l-5 5v7l-3-2V8z" fill="#b8dce8" /> },
  { name: "Snap", more: false, art: <><path d="M5 4h6q4 0 4 4" fill="none" stroke="#5c86d8" strokeWidth="3" /><path d="M5 12h6q4 0 4-4" fill="none" stroke="#ea7c84" strokeWidth="3" /><path d="M2 2v12" stroke="#b8c8d4" strokeWidth="2" strokeDasharray="2 2" /></> },
  { name: "Move", more: true, art: <path d="M8 2v12M2 8h12M6.500 3.500 8 2l1.500 1.500M6.500 12.500 8 14l1.500-1.500M3.500 6.500 2 8l1.500 1.500M12.500 6.500 14 8l-1.500 1.500" fill="none" stroke="#6e93ee" /> },
  { name: "Select", more: true, art: <rect x="1.500" y="1.500" width="13" height="13" fill="none" stroke="#7f9cf0" strokeDasharray="2 1" /> },
  { name: "Align", more: true, art: <><path d="M2 6h3v6H2zM11 6h3v6h-3z" fill="#ef7f80" /><path d="M6.500 2h3v10h-3z" fill="#a9dcea" /><path d="M2 13h12v2H2z" fill="#5d8cf0" /></> },
  { name: "Component", more: true, art: <><path d="M4 0v16M6 0v16M8 0v16M10 0v16M12 0v16M0 4h16M0 6h16M0 8h16M0 10h16M0 12h16" stroke="#9db4bf" /><path d="M3 3h10v10H3z" fill="#d5dde2" /></> },
  { name: "Route", more: true, art: <><path d="M3 13 13 4" stroke="#5d80a8" strokeWidth="2" /><path d="M2 8V2h7M6 0l3 2-3 2.500" fill="none" stroke="#d99a18" strokeWidth="1.500" /><circle cx="13.500" cy="3" r="2" fill="#404040" stroke="#d99a18" strokeWidth="1.400" /><circle cx="3.500" cy="13.500" r="2" fill="#404040" stroke="#d99a18" strokeWidth="1.400" /></> },
  { name: "Tune", more: true, art: <><path d="M2 12V6q0-3 2-3t2 3v4q0 1.500 1 1.500T8 10V5q0-2 1-2t1 2v5q0 1.500 1 1.500t1-1.500V5q0-2 1-2t1 3v6" fill="none" stroke="#6285b4" strokeWidth="1.200" /><circle cx="2" cy="13" r="1.500" fill="#404040" stroke="#c98f20" /><circle cx="14" cy="13" r="1.500" fill="#404040" stroke="#c98f20" /></> },
  { name: "Via", more: true, art: <><path d="M10 4.500h6v3h-6z" fill="#4da03c" /><path d="M5 9h3v7H5z" fill="#f0b848" /><circle cx="6.500" cy="6" r="5.500" fill="#f4cb10" /><circle cx="6.500" cy="6" r="2" fill="#404040" /></> },
  { name: "Polygon", more: true, art: <path d="M1 7h6V2h8v12H1z" fill="#bfe2ee" stroke="#8fb8c8" strokeWidth=".6" /> },
  { name: "Room", more: true, art: <><rect x=".5" y=".5" width="15" height="15" fill="none" stroke="#e88ae0" /><path d="M5 11l6-6" stroke="#6285b4" strokeWidth="2" /><circle cx="11.500" cy="4.500" r="1.500" fill="#404040" stroke="#d99a18" /><circle cx="4.500" cy="11.500" r="1.500" fill="#404040" stroke="#d99a18" /></> },
  { name: "Dimension", more: true, art: <><path d="M2 3v12h12V3" fill="none" stroke="#6a8db8" /><circle cx="2" cy="2" r="1.500" fill="#404040" stroke="#c98f20" /><circle cx="14" cy="2" r="1.500" fill="#404040" stroke="#c98f20" /><text x="8" y="12" fontSize="9" textAnchor="middle" fill="#d0d0d0">10</text></> },
  { name: "Text", more: false, art: <text x="8" y="15" fontSize="20" fontWeight="bold" fontFamily="Liberation Serif, serif" textAnchor="middle" fill="#5f9fe4">A</text> },
  { name: "Line", more: true, art: <path d="M1.500 14.500l13-13" stroke="#5b95dc" strokeWidth="2" /> },
];

function ActiveBar() {
  return (
    <div className="absolute inset-x-0 top-[3px] flex justify-center">
      <div className="flex h-8 rounded bg-[#404040] pr-1.5 pl-1">
        {tools.map((t) => (
          <button key={t.name} aria-label={t.name} className="relative flex w-8 items-center justify-center">
            <svg width="16" height="16" viewBox="0 0 16 16" className="overflow-visible" aria-hidden="true">{t.art}</svg>
            {t.more && <svg width="5" height="5" viewBox="0 0 5 5" className="absolute right-0 bottom-0.5" aria-hidden="true"><path d="M5 0v5H0z" fill="#d4d4d4" /></svg>}
            {t.name === "Component" && <span className="absolute top-2 left-0 h-4 w-px bg-[#222]" />}
          </button>
        ))}
      </div>
    </div>
  );
}

/* ---------- context menu ---------- */

const steps = ["1 Mil", "5 Mil", "10 Mil", "20 Mil", "25 Mil", "50 Mil", "100 Mil", "0.025 mm", "0.100 mm", "0.250 mm", "0.500 mm", "1.000 mm", "2.500 mm"];

const item = "flex h-[29px] w-full items-center justify-between pr-[34px] pl-[39px] text-left";

function GridMenu() {
  return (
    <div role="menu" className="absolute top-[311px] left-[753px] w-[348px] border border-[#222] bg-[#424242] font-['Noto_Sans',sans-serif] text-[15px] text-[#e2e2e2] shadow-[3px_3px_4px_rgba(0,0,0,0.4)]">
      {steps.map((s) => <button key={s} role="menuitem" className={item}>{s}</button>)}
      <button role="menuitem" className={item}>Grid Properties<span>Ctrl+G</span></button>
      <button role="menuitem" className={item}>
        <span><Key parts={["Set Global Snap ", "G", "rid..."]} /></span><span>Shift+Ctrl+G</span>
      </button>
      <div className="my-0.5 ml-[39px] border-t border-[#262626]" />
      {["X", "Y"].map((a) => (
        <button key={a} role="menuitem" className="flex h-[29px] w-full items-center justify-between pr-[11px] pl-[39px]">
          <span><Key parts={["Snap Grid ", a, ""]} /></span>
          <svg width="5" height="8" viewBox="0 0 5 8" aria-hidden="true"><path d="M0 0l5 4-5 4z" fill="#eee" /></svg>
        </button>
      ))}
    </div>
  );
}

/* ---------- layers and status ---------- */

const layers: [string, string][] = [
  ["[1] Top Layer", "bg-[#ff0000]"], ["[2] Bottom Layer", "bg-[#0000ff]"], ["Mechanical 1", "bg-[#ff00ff]"], ["Mechanical 13", "bg-[#ff00ff]"],
  ["Mechanical 15", "bg-[#008000]"], ["Top Overlay", "bg-[#ffff00]"], ["Bottom Overlay", "bg-[#808000]"], ["Top Paste", "bg-[#808080]"],
  ["Bottom Paste", "bg-[#800000]"], ["Top Solder", "bg-[#800080]"], ["Bottom Solder", "bg-[#ff00ff]"], ["Drill Guide", "bg-[#800000]"],
];

function LayerBar() {
  return (
    <div className="flex h-[27px] shrink-0 overflow-hidden border-t border-[#222] bg-[#343434] font-['Noto_Sans',sans-serif] text-[13px] text-[#dedede]">
      <button className="mt-1 ml-1 flex h-4 w-[57px] shrink-0 overflow-hidden rounded-r border border-[#222]">
        <span className="h-full w-8 bg-[#ff0000]" />
        <span className="flex-1 bg-[#555] leading-[14px]">LS</span>
      </button>
      <div className="mt-px mr-1 ml-[5px] flex h-[25px] w-[50px] shrink-0 rounded border border-[#222] bg-[#505050]">
        <button aria-label="Previous layer" className="flex flex-1 items-center justify-center border-r border-[#2a2a2a]"><svg width="5" height="8" viewBox="0 0 5 8" aria-hidden="true"><path d="M5 0 0 4l5 4z" fill="#8c8c8c" /></svg></button>
        <button aria-label="Next layer" className="flex flex-1 items-center justify-center"><svg width="5" height="8" viewBox="0 0 5 8" aria-hidden="true"><path d="M0 0l5 4-5 4z" fill="#fff" /></svg></button>
      </div>
      {layers.map(([name, color], i) => (
        <button
          key={name}
          className={
            i === 0
              ? "flex h-[26px] shrink-0 items-center gap-[11px] rounded-b border-r border-b border-[#232323] bg-[#515151] pr-[7px] pl-2 font-bold whitespace-nowrap text-white"
              : "flex h-[26px] shrink-0 items-center gap-[11px] rounded-b border-r border-b border-[#232323] bg-[#383838] pr-[7px] pl-2 whitespace-nowrap"
          }
        >
          <span className={`h-[13px] w-[13px] border border-[#b0b0b0] ${color}`} />
          {name}
        </button>
      ))}
    </div>
  );
}

function StatusBar() {
  return (
    <footer className="shrink-0">
      <div className="flex h-[29px] items-center bg-[#404040] font-['Noto_Sans',sans-serif] text-[13px] text-[#dedede]">
        <div className="flex w-[487px] items-center whitespace-pre"><span className="ml-1.5">X:3155mil Y:2890mil</span><span className="ml-4">Grid: 5mil</span><span className="ml-7">(Hotspot Snap (All Layers))</span></div>
        <span className="h-6 w-px self-end bg-[#2c2c2c]" />
        <div className="w-[485px] pl-[5px]">0 Connections Selected</div>
        <span className="h-6 w-px self-end bg-[#2c2c2c]" />
        <button className="mr-[3px] ml-auto h-[23px] w-[51px] rounded border border-[#222] bg-[#545454] text-center text-[13px] leading-5">Panels</button>
      </div>
      <div className="flex h-0.5 bg-[#1c1c1c]">
        <span className="ml-[60px] w-[430px] bg-[#eee]" />
        <span className="ml-[826px] w-[61px] bg-[#555]" />
      </div>
    </footer>
  );
}

/* ---------- page ---------- */

export default function App() {
  return (
    <div className="relative flex h-screen overflow-hidden bg-black py-[9px] pl-[9px] font-['Open_Sans','Noto_Sans',sans-serif] text-[#e0e0e0]">
      <div className="flex min-w-0 flex-1 flex-col bg-[#343434]">
        <TitleBar />
        <MenuBar />
        <UtilityBar />
        <main className="flex min-h-0 flex-1 p-[3px]">
          <ProjectsPanel />
          <section className="ml-1 flex min-w-0 flex-1 flex-col">
            <div className="flex h-[31px] shrink-0 pt-px">
              <button className="flex h-[29px] items-center gap-1 rounded-t border border-[#222] bg-[#4f4f4f] pr-1 pl-1 text-[13px] text-[#f0f0f0]"><Pcb />STC89C52.PcbDoc *</button>
            </div>
            <div className="relative flex min-h-0 flex-1 overflow-hidden bg-[#6e6a69]">
              <Board />
              <ActiveBar />
              <GridMenu />
            </div>
            <LayerBar />
          </section>
          <aside className="ml-[3px] w-8 shrink-0 bg-[#404040] px-[3px] pt-px">
            <button className="flex h-[70px] w-6 items-center justify-center rounded border border-[#222] bg-[#525252] text-[13px] text-[#f0f0f0] [writing-mode:vertical-rl]">Messages</button>
            <button className="mt-0.5 flex h-[72px] w-6 items-center justify-center rounded border border-[#222] bg-[#525252] text-[13px] text-[#f0f0f0] [writing-mode:vertical-rl]">Properties</button>
            <div className="mt-4 -mr-[3px] ml-auto flex h-[59px] w-1.5 items-end rounded bg-[#777]">
              <span className="mx-auto h-[38px] w-1 rounded bg-[#f87c14]" />
            </div>
          </aside>
        </main>
        <StatusBar />
      </div>
      <div className="w-[9px] shrink-0 pb-[57px]">
        <div className="h-full bg-linear-to-b from-[#5a3326] via-[#914b46] via-30% to-[#4c3a22]" />
      </div>
      <p className="absolute right-[11px] bottom-[9px] font-['Liberation_Sans',sans-serif] text-base leading-5 text-[#bdbdbd]">https://blog.csdn.net/as480133937</p>
    </div>
  );
}
